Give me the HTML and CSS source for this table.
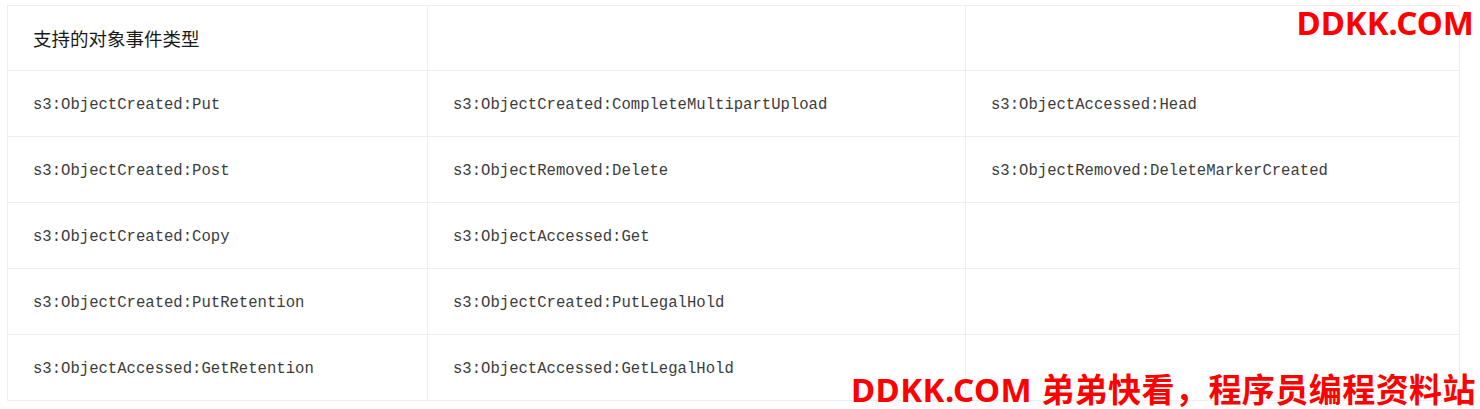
FILE: index.html
```html
<!doctype html>
<html>
<head>
<meta charset="UTF-8">
<title>支持的对象事件类型</title>
<link rel="stylesheet" href="styles.css">
</head>
<body>
<div class="page">
<table class="events">
  <colgroup>
    <col class="col1">
    <col class="col2">
    <col class="col3">
  </colgroup>
  <thead>
    <tr><th>支持的对象事件类型</th><th></th><th></th></tr>
  </thead>
  <tbody>
    <tr><td><code>s3:ObjectCreated:Put</code></td><td><code>s3:ObjectCreated:CompleteMultipartUpload</code></td><td><code>s3:ObjectAccessed:Head</code></td></tr>
    <tr><td><code>s3:ObjectCreated:Post</code></td><td><code>s3:ObjectRemoved:Delete</code></td><td><code>s3:ObjectRemoved:DeleteMarkerCreated</code></td></tr>
    <tr><td><code>s3:ObjectCreated:Copy</code></td><td><code>s3:ObjectAccessed:Get</code></td><td></td></tr>
    <tr><td><code>s3:ObjectCreated:PutRetention</code></td><td><code>s3:ObjectCreated:PutLegalHold</code></td><td></td></tr>
    <tr><td><code>s3:ObjectAccessed:GetRetention</code></td><td><code>s3:ObjectAccessed:GetLegalHold</code></td><td></td></tr>
  </tbody>
</table>
</div>
<div class="mark mark-top">DDKK.COM</div>
<div class="mark mark-bottom">DDKK.COM 弟弟快看，程序员编程资料站</div>
</body>
</html>
```

FILE: styles.css
```css
body { margin: 0; background: #fff; font-family: "Noto Sans CJK SC", "Noto Sans", sans-serif; color: #222; overflow: hidden; }
.page { padding: 5px 0 0 7px; }
.events { border-collapse: collapse; table-layout: fixed; width: 1452px; }
.events .col1 { width: 420px; }
.events .col2 { width: 538px; }
.events .col3 { width: 494px; }
.events th, .events td { border: 1px solid #efefef; padding: 0 25px; height: 65px; text-align: left; vertical-align: middle; }
.events th { height: 64px; font-weight: normal; font-size: 18.5px; color: #1a1a1a; }
.events code { font-family: "Liberation Mono", monospace; font-size: 15.6px; color: #3c3c3c; position: relative; top: -2px; }
.mark { position: absolute; color: #ff0000; font-family: "Noto Sans", "Noto Sans CJK SC", sans-serif; font-weight: bold; white-space: nowrap; }
.mark-top { top: 0; right: 6px; font-size: 33px; line-height: 46px; }
.mark-bottom { top: 373px; right: 4px; font-size: 33px; line-height: 34px; letter-spacing: 0.45px; }
```
